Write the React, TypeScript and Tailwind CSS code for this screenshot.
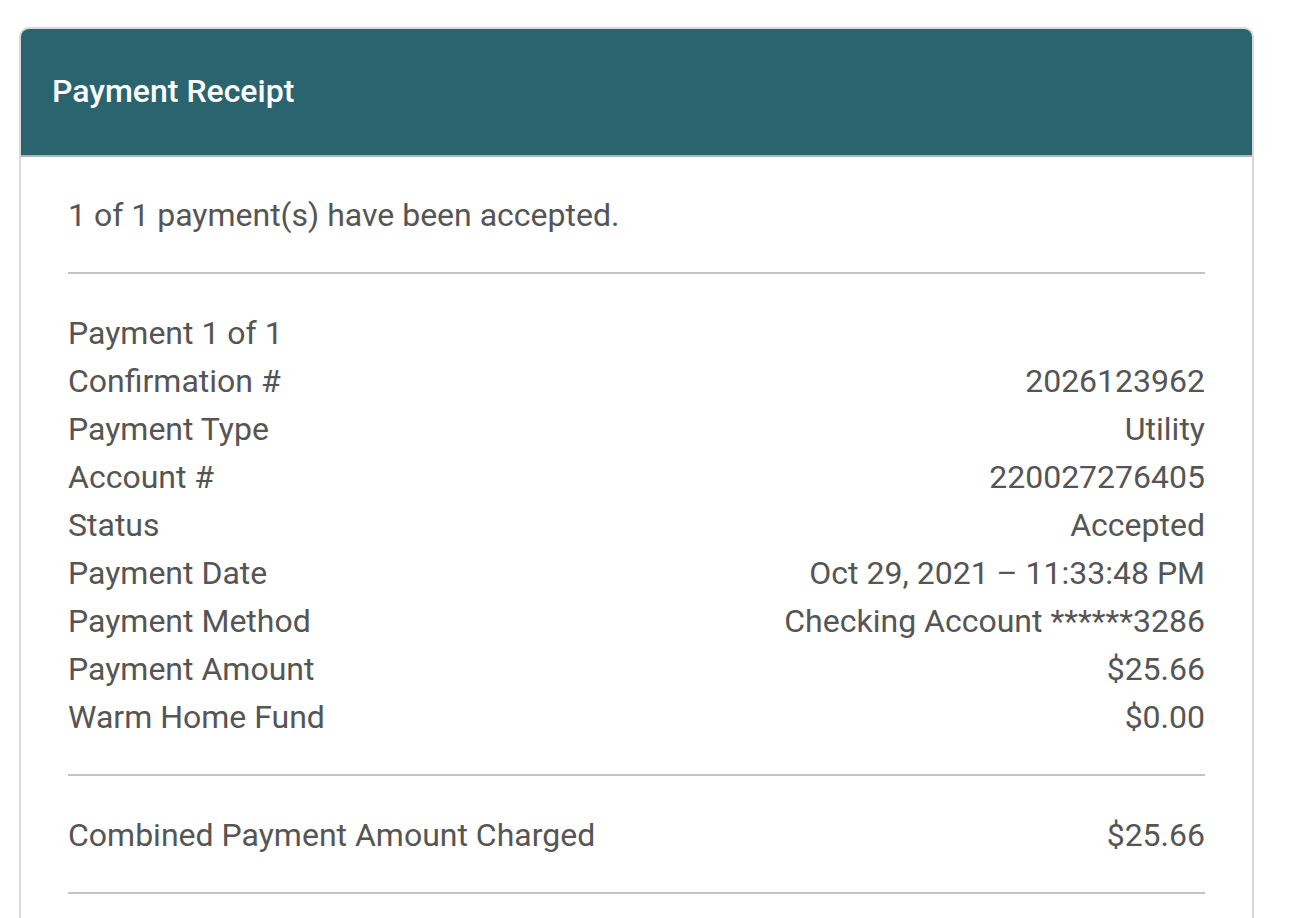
const rows: [string, string][] = [
  ['Confirmation #', '2026123962'],
  ['Payment Type', 'Utility'],
  ['Account #', '220027276405'],
  ['Status', 'Accepted'],
  ['Payment Date', 'Oct 29, 2021 \u2013 11:33:48 PM'],
  ['Payment Method', 'Checking Account ******3286'],
  ['Payment Amount', '$25.66'],
  ['Warm Home Fund', '$0.00'],
]

export default function App() {
  return (
    <div className="min-h-[918px] bg-white pt-[27px] pl-[19px] w-[1290px] font-['Roboto',sans-serif]">
      <div className="w-[1235px] rounded-t-[10px] border-2 border-b-0 border-[#d9d9d9] overflow-hidden">

        {/* Header */}
        <div className="bg-[#2a646e] border-b-2 border-[#b4b4b4] px-[31px] pt-[38px] pb-[40px]">
          <h1 className="text-[32px] leading-[48px] font-medium text-white">Payment Receipt</h1>
        </div>

        {/* Body */}
        <div className="px-[47px] text-[32px] leading-[48px] text-[#555555]">
          <div className="pt-[34px] pb-[33px] border-b-2 border-[#c4c4c4]">
            <p>1 of 1 payment(s) have been accepted.</p>
          </div>

          <div className="pt-[35px] pb-[33px] border-b-2 border-[#c4c4c4]">
            <p>Payment 1 of 1</p>
            {rows.map(([label, value]) => (
              <div key={label} className="flex justify-between">
                <span>{label}</span>
                <span>{value}</span>
              </div>
            ))}
          </div>

          <div className="pt-[35px] pb-[33px] border-b-2 border-[#c4c4c4] flex justify-between">
            <span>Combined Payment Amount Charged</span>
            <span>$25.66</span>
          </div>
          <div className="h-[40px]" />
        </div>
      </div>
    </div>
  )
}
